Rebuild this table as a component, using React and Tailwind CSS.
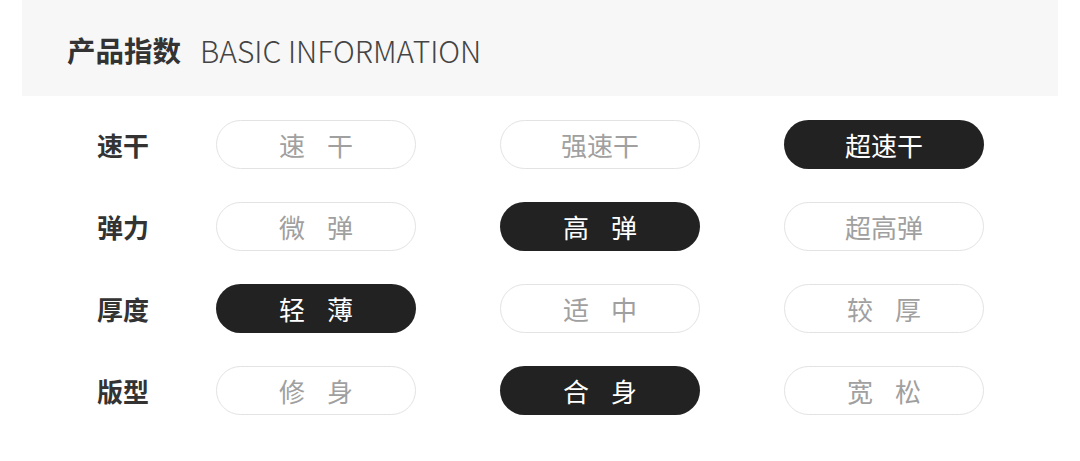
import React from 'react';

const font = { fontFamily: '"Noto Sans CJK SC", "Noto Sans", sans-serif' };

// 每一行：标签 + 三个选项，active 为选中项
const rows = [
  { label: '速干', options: [['速', '干'], ['强速干'], ['超速干']], active: 2 },
  { label: '弹力', options: [['微', '弹'], ['高', '弹'], ['超高弹']], active: 1 },
  { label: '厚度', options: [['轻', '薄'], ['适', '中'], ['较', '厚']], active: 0 },
  { label: '版型', options: [['修', '身'], ['合', '身'], ['宽', '松']], active: 1 },
];

const Pill = ({ parts, active }) => (
  <div
    className={`w-[200px] h-[49px] rounded-full flex items-center justify-center gap-[22px] text-[26px] leading-none ${
      active ? 'bg-[#222222] text-white' : 'border border-[#e3e3e3] text-[#a0a0a0]'
    }`}
  >
    {parts.map((p, i) => (
      <span key={i}>{p}</span>
    ))}
  </div>
);

const App = () => {
  return (
    <div className="w-[1080px] h-[461px] bg-white" style={font}>
      {/* Header */}
      <div className="mx-[22px] h-[96px] bg-[#f7f7f7] flex items-center pl-[45px] pt-[4px]">
        <span className="text-[28.5px] font-bold text-[#333333] leading-none">产品指数</span>
        <span className="ml-[19px] text-[30px] font-light text-[#444444] leading-none">BASIC INFORMATION</span>
      </div>

      {/* Rows */}
      <div className="pl-[97px] pt-[24px] flex flex-col gap-[33px]">
        {rows.map((row) => (
          <div key={row.label} className="flex items-center h-[49px]">
            <div className="w-[119px] text-[26px] font-bold text-[#333333] leading-none">{row.label}</div>
            <div className="flex gap-[84px]">
              {row.options.map((parts, i) => (
                <Pill key={i} parts={parts} active={i === row.active} />
              ))}
            </div>
          </div>
        ))}
      </div>
    </div>
  );
};

export default App;
